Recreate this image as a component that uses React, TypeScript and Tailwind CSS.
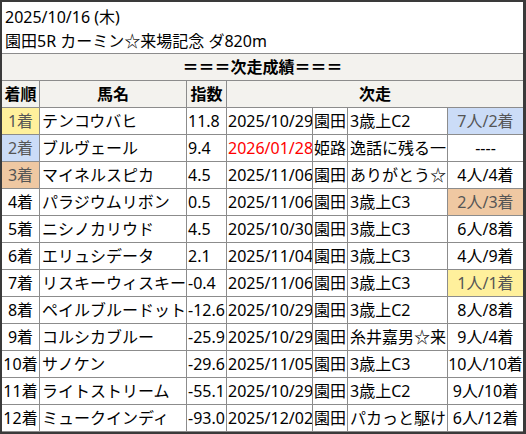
import React from "react";

type Row = {
  rank: string;
  rankBg?: string;
  name: string;
  idx: string;
  date: string;
  red?: boolean;
  venue: string;
  race: string;
  res: string;
  resBg?: string;
};

const rows: Row[] = [
  { rank: "1着", rankBg: "bg-[#fff09c] text-[#555]", name: "テンコウバヒ", idx: "11.8", date: "2025/10/29", venue: "園田", race: "3歳上C2", res: "7人/2着", resBg: "bg-[#cbdcf7] text-[#555]" },
  { rank: "2着", rankBg: "bg-[#cbdcf7] text-[#555]", name: "ブルヴェール", idx: "9.4", date: "2026/01/28", red: true, venue: "姫路", race: "逸話に残る一", res: "----" },
  { rank: "3着", rankBg: "bg-[#efc8a2] text-[#555]", name: "マイネルスピカ", idx: "4.5", date: "2025/11/06", venue: "園田", race: "ありがとう☆", res: "4人/4着" },
  { rank: "4着", name: "パラジウムリボン", idx: "0.5", date: "2025/11/06", venue: "園田", race: "3歳上C3", res: "2人/3着", resBg: "bg-[#efc8a2] text-[#555]" },
  { rank: "5着", name: "ニシノカリウド", idx: "4.5", date: "2025/10/30", venue: "園田", race: "3歳上C3", res: "6人/8着" },
  { rank: "6着", name: "エリュシデータ", idx: "2.1", date: "2025/11/04", venue: "園田", race: "3歳上C3", res: "4人/9着" },
  { rank: "7着", name: "リスキーウィスキー", idx: "-0.4", date: "2025/11/06", venue: "園田", race: "3歳上C3", res: "1人/1着", resBg: "bg-[#fff09c] text-[#555]" },
  { rank: "8着", name: "ペイルブルードット", idx: "-12.6", date: "2025/10/29", venue: "園田", race: "3歳上C2", res: "8人/8着" },
  { rank: "9着", name: "コルシカブルー", idx: "-25.9", date: "2025/10/29", venue: "園田", race: "糸井嘉男☆来", res: "9人/4着" },
  { rank: "10着", name: "サノケン", idx: "-29.6", date: "2025/11/05", venue: "園田", race: "3歳上C3", res: "10人/10着" },
  { rank: "11着", name: "ライトストリーム", idx: "-55.1", date: "2025/10/29", venue: "園田", race: "3歳上C2", res: "9人/10着" },
  { rank: "12着", name: "ミュークインディ", idx: "-93.0", date: "2025/12/02", venue: "園田", race: "パカっと駆け", res: "6人/12着" },
];

const cell = "h-full flex items-center border-r border-[#8c8c8c] overflow-hidden whitespace-nowrap";

export default function App() {
  return (
    <div
      className="w-[526px] h-[434px] bg-[#3a3a3a] pt-[2px] pl-[2px] overflow-hidden text-[16px] text-black"
      style={{ fontFamily: '"Noto Sans", "Noto Sans CJK JP", sans-serif' }}
    >
      <div className="w-[521px] bg-white">
        <div className="h-[52px] border-b border-[#8c8c8c] pl-[3px] pt-[3px] leading-[24px] flex flex-col">
          <div>2025/10/16 (木)</div>
          <div>園田5R カーミン☆来場記念 ダ820m</div>
        </div>
        <div className="h-[27px] border-b border-[#8c8c8c] bg-[#f3f2ee] flex items-center justify-center font-bold">
          ＝＝＝次走成績＝＝＝
        </div>
        <div className="h-[27px] border-b border-[#8c8c8c] bg-[#f3f2ee] flex font-bold">
          <div className={`${cell} w-[38px] justify-center`}>着順</div>
          <div className={`${cell} w-[147px] justify-center`}>馬名</div>
          <div className={`${cell} w-[40px] justify-center`}>指数</div>
          <div className="h-full flex items-center justify-center flex-1">次走</div>
        </div>
        {rows.map((r, i) => (
          <div key={i} className="h-[27px] border-b border-[#8c8c8c] flex">
            <div className={`${cell} w-[38px] justify-center ${r.rankBg ?? ""}`}>{r.rank}</div>
            <div className={`${cell} w-[147px] pl-[2px]`}>{r.name}</div>
            <div className={`${cell} w-[40px] pl-[1px]`}>{r.idx}</div>
            <div className={`${cell} w-[86px] pl-[1px] ${r.red ? "text-[#ff0000]" : ""}`}>{r.date}</div>
            <div className={`${cell} w-[35px] pl-[1px]`}>{r.venue}</div>
            <div className={`${cell} w-[100px] pl-[2px]`}>{r.race}</div>
            <div className={`h-full flex items-center justify-center whitespace-nowrap w-[75px] ${r.resBg ?? ""}`}>{r.res}</div>
          </div>
        ))}
      </div>
    </div>
  );
}
